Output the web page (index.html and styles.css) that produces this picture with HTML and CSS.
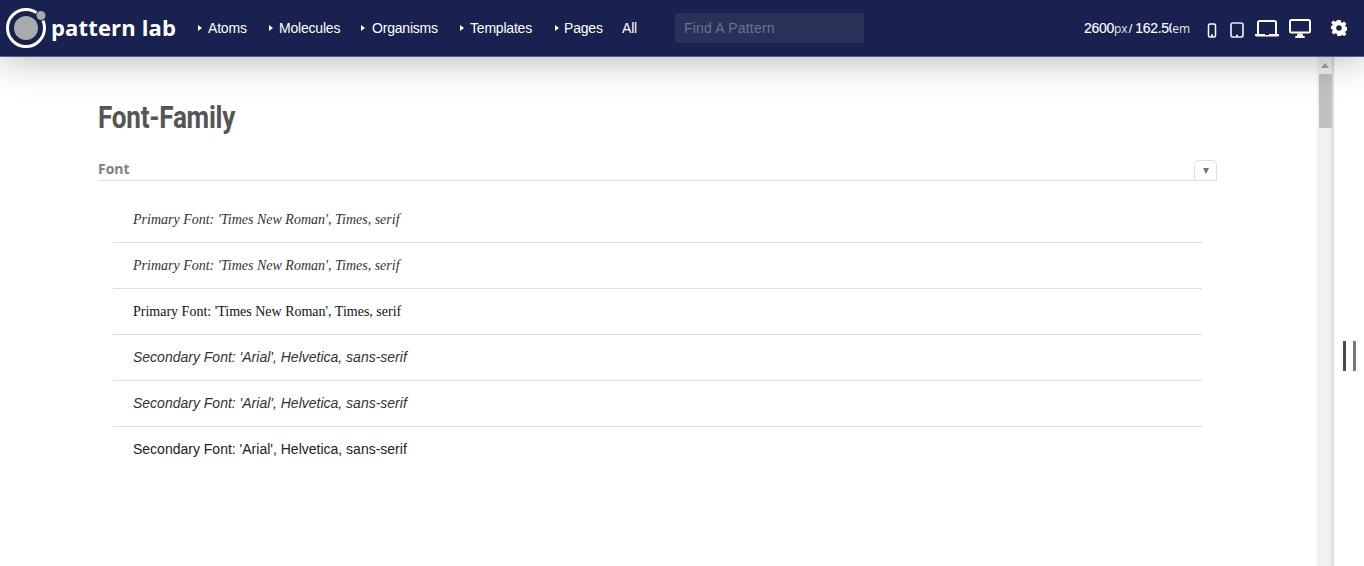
FILE: index.html
```html
<!DOCTYPE html>
<html lang="en">
<head>
<meta charset="utf-8">
<title>Font-Family</title>
<link rel="stylesheet" href="styles.css">
</head>
<body>
<header class="header">
  <a class="logo">
    <svg class="logo-mark" width="46" height="46" viewBox="0 0 46 46"><circle cx="23" cy="23" r="18.5" fill="none" stroke="#fff" stroke-width="3"/><circle cx="23" cy="23" r="12" fill="#aaa"/><circle cx="38" cy="10.500" r="5.500" fill="#18214f"/><circle cx="38" cy="10.500" r="4.500" fill="#aaa"/></svg>
    <span class="logo-text">pattern lab</span>
  </a>
  <nav class="nav">
    <a class="nav-item nav-atoms"><i class="tri"></i>Atoms</a>
    <a class="nav-item nav-molecules"><i class="tri"></i>Molecules</a>
    <a class="nav-item nav-organisms"><i class="tri"></i>Organisms</a>
    <a class="nav-item nav-templates"><i class="tri"></i>Templates</a>
    <a class="nav-item nav-pages"><i class="tri"></i>Pages</a>
    <a class="nav-item nav-all">All</a>
  </nav>
  <div class="search">Find A Pattern</div>
  <div class="size"><b class="size-num size-px">2600</b><span class="size-unit">px</span><span class="size-sep">/</span><b class="size-num size-em">162.50</b><span class="size-unit">em</span></div>
  <div class="tools">
    <svg class="ico-phone" width="10" height="15" viewBox="0 0 10 15"><rect x="1.500" y="1" width="7" height="13" rx="1.500" fill="none" stroke="#fff" stroke-width="1.500"/><rect x="4" y="11.500" width="2" height="1.500" fill="#fff"/></svg>
    <svg class="ico-tablet" width="14" height="16" viewBox="0 0 14 16"><rect x="1" y="1" width="12" height="14" rx="2" fill="none" stroke="#e6e7ee" stroke-width="1.700"/><rect x="6" y="12.800" width="2" height="1.600" fill="#fff"/></svg>
    <svg class="ico-laptop" width="24" height="17" viewBox="0 0 24 17"><path d="M3 14V2.500A1.500 1.500 0 0 1 4.500 1h15A1.500 1.500 0 0 1 21 2.500V14" fill="none" stroke="#fff" stroke-width="2"/><path d="M0 14h10v1h4v-1h10v1a1.500 1.500 0 0 1-1.500 1.500h-21A1.500 1.500 0 0 1 0 15z" fill="#fff"/></svg>
    <svg class="ico-desktop" width="22" height="19" viewBox="0 0 22 19"><rect x="1" y="1" width="20" height="12.600" rx="1.500" fill="none" stroke="#fff" stroke-width="2"/><path d="M8.500 14.500h5l.6 2.500h1.600v2H6.300v-2h1.600z" fill="#fff"/></svg>
    <svg class="ico-gear" width="16" height="16" viewBox="0 0 24 24"><path fill="#fff" fill-rule="evenodd" d="M9.600 0h4.800l.6 3.200 2 .85 2.700-1.850 3.400 3.400-1.850 2.700.85 2 3.200.6v4.800l-3.200.6-.85 2 1.850 2.700-3.400 3.400-2.700-1.850-2 .85-.6 3.200H9.600L9 20.800l-2-.85-2.700 1.850-3.400-3.400 1.850-2.700-.85-2-3.200-.6V9.300l3.200-.6.850-2L.100 4 3.500.6 6.200 2.450l2-.85zM12 7.800a4.200 4.200 0 1 0 0 8.400 4.200 4.200 0 0 0 0-8.400z"/></svg>
  </div>
</header>
<div class="workspace">
  <main class="frame">
    <h1 class="title">Font-Family</h1>
    <section class="pattern">
      <div class="pattern-head">
        <h2 class="pattern-name">Font</h2>
        <span class="toggle"><i class="toggle-tri"></i></span>
      </div>
      <ul class="fonts">
        <li class="font-row times italic">Primary Font: 'Times New Roman', Times, serif</li>
        <li class="font-row times italic">Primary Font: 'Times New Roman', Times, serif</li>
        <li class="font-row times">Primary Font: 'Times New Roman', Times, serif</li>
        <li class="font-row arial italic">Secondary Font: 'Arial', Helvetica, sans-serif</li>
        <li class="font-row arial italic">Secondary Font: 'Arial', Helvetica, sans-serif</li>
        <li class="font-row arial">Secondary Font: 'Arial', Helvetica, sans-serif</li>
      </ul>
    </section>
  </main>
  <div class="scrollbar"><i class="scroll-up"></i><i class="scroll-thumb"></i></div>
  <div class="handle"><i class="bar bar-dark"></i><i class="bar bar-light"></i></div>
</div>
</body>
</html>
```
FILE: styles.css
```css
* { box-sizing: border-box; }
html, body { margin: 0; height: 100%; overflow: hidden; background: #fff; }
body { display: flex; flex-direction: column; font-family: "Liberation Sans", Arial, sans-serif; }

.header {
  position: relative;
  z-index: 2;
  flex: none;
  height: 57px;
  display: flex;
  align-items: center;
  background: #18214f;
  border-bottom: 1px solid #5a6188;
  box-shadow: 0 0 40px rgba(0, 0, 0, .32);
  color: #fff;
}
.logo { display: flex; align-items: center; width: 198px; padding-left: 3px; }
.logo-mark { flex: none; }
.logo-text {
  margin-left: 2px;
  padding-bottom: 2px;
  font: 700 22px/1 "Open Sans", sans-serif;
  letter-spacing: .15px;
  white-space: nowrap;
}
.nav { display: flex; width: 477px; font-size: 14px; letter-spacing: -.2px; }
.nav-item { display: flex; align-items: center; white-space: nowrap; }
.tri {
  width: 0; height: 0; margin-right: 6px;
  border-left: 4px solid #fff; border-top: 3px solid transparent; border-bottom: 3px solid transparent;
}
.nav-atoms { width: 71px; }
.nav-molecules { width: 92px; }
.nav-organisms { width: 99px; }
.nav-organisms .tri { margin-right: 7px; }
.nav-templates { width: 95px; }
.nav-pages { width: 67px; }
.nav-pages .tri { margin-right: 5px; }
.search {
  flex: none;
  width: 189px; height: 30px;
  padding-left: 9px;
  line-height: 30px;
  font-size: 14px;
  letter-spacing: .2px;
  background: #2a3159;
  color: #6d7390;
}
.size {
  display: flex; align-items: center;
  margin-left: 220px;
  font-size: 13px;
  white-space: nowrap;
}
.size-num { font-weight: 400; font-size: 14px; -webkit-text-stroke: .12px #fff; letter-spacing: -.3px; }
.size-px { width: 30px; }
.size-em { width: 37px; overflow: hidden; }
.size-unit { font-family: "Open Sans", sans-serif; font-size: 12px; color: #e4e5ec; }
.size-sep { margin: 0 3px 0 1px; }
.tools { display: flex; align-items: center; margin-left: 17px; }
.tools svg { flex: none; display: block; }
.ico-phone { margin-top: 4px; }
.ico-tablet { margin-left: 13px; margin-top: 3px; }
.ico-laptop { margin-left: 11px; margin-top: 1px; }
.ico-desktop { margin-left: 10px; }
.ico-gear { margin-left: 20px; }

.workspace { flex: 1; min-height: 0; display: flex; }
.frame { flex: 1; min-width: 0; padding: 0 100px 0 98px; }
.title {
  margin: 41px 0 0;
  width: fit-content;
  font: 700 32px/38px Roboto, sans-serif;
  color: #555;
  transform: scaleX(.815);
  transform-origin: left;
  letter-spacing: -.3px;
}
.pattern { margin-top: 17px; }
.pattern-head {
  position: relative;
  height: 28px;
  border-bottom: 1px solid #ddd;
}
.pattern-name {
  margin: 0;
  padding-top: 6px;
  font: 700 14px/19px "Open Sans", sans-serif;
  letter-spacing: -.05px;
  color: #808080;
}
.toggle {
  position: absolute;
  right: 0; bottom: -1px;
  width: 23px; height: 21px;
  display: flex; align-items: center; justify-content: center;
  background: #fff;
  border: 1px solid #ddd;
  border-radius: 5px 5px 0 0;
}
.toggle-tri {
  width: 0; height: 0;
  border-top: 6px solid #777; border-left: 3.500px solid transparent; border-right: 3.500px solid transparent;
}
.fonts { list-style: none; margin: 16px 15px 0; padding: 0; }
.font-row {
  height: 46px;
  padding-left: 20px;
  line-height: 46px;
  font-size: 14px;
  color: #222;
  border-bottom: 1px solid #ddd;
}
.font-row:last-child { border-bottom: 0; }
.times { font-family: "Liberation Serif", "Times New Roman", serif; color: #111; }
.arial { font-family: "Liberation Sans", Arial, sans-serif; line-height: 44px; }
.italic { font-style: italic; color: #333; }

.scrollbar {
  flex: none;
  width: 17px;
  position: relative;
  background: linear-gradient(to right, #f1f1f1 0, #f1f1f1 13px, #d8d8d8 17px);
}
.scroll-up {
  position: absolute; top: 6px; left: 4px;
  width: 0; height: 0;
  border-bottom: 5px solid #a3a3a3; border-left: 4px solid transparent; border-right: 4px solid transparent;
}
.scroll-thumb { position: absolute; top: 17px; left: 2px; width: 13px; height: 54px; background: #c1c1c1; }
.handle {
  flex: none;
  width: 30px;
  display: flex;
  align-items: center;
  gap: 7px;
  padding: 0 0 0 9px;
  background: #fff;
}
.bar { width: 3px; height: 30px; margin-top: 89px; }
.bar-dark { background: #4a4a4a; }
.bar-light { width: 3px; background: #7a7a7a; }
```
